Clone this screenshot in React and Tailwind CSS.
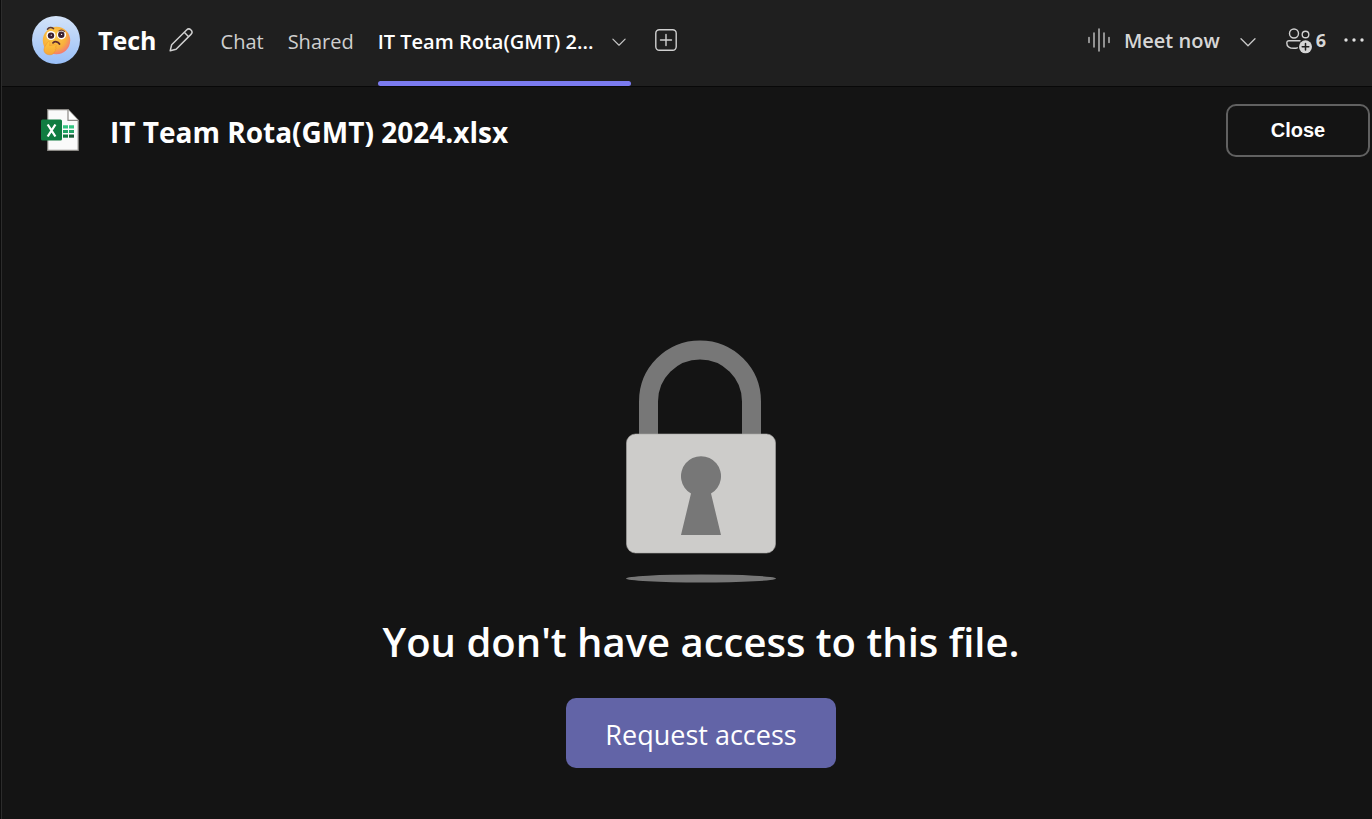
import React from "react";

const sans = "font-['Open_Sans','Noto_Sans',sans-serif]";

function Avatar() {
  return (
    <svg viewBox="0 0 48 48" className="h-12 w-12 shrink-0" role="img" aria-label="Group picture">
      <defs>
        <linearGradient id="sky" x1="0" y1="0" x2="0" y2="1">
          <stop offset="0" stopColor="#d3e3f8" />
          <stop offset="1" stopColor="#99bff8" />
        </linearGradient>
        <radialGradient id="face" cx="0.4" cy="0.35" r="0.7">
          <stop offset="0" stopColor="#fcd04b" />
          <stop offset="0.65" stopColor="#f8b03c" />
          <stop offset="1" stopColor="#f2747a" />
        </radialGradient>
        <linearGradient id="hand" x1="0" y1="0" x2="0" y2="1">
          <stop offset="0" stopColor="#ffc93f" />
          <stop offset="1" stopColor="#f5a637" />
        </linearGradient>
      </defs>
      <circle cx="24" cy="24" r="24" fill="url(#sky)" />
      <circle cx="24.500" cy="24.500" r="13.700" fill="url(#face)" />
      <circle cx="19" cy="19.500" r="4.600" fill="#fff" />
      <circle cx="29.500" cy="18.800" r="4.600" fill="#fff" />
      <circle cx="19" cy="19.600" r="3.200" fill="#3c2130" />
      <circle cx="29.300" cy="18.800" r="3.200" fill="#3c2130" />
      <circle cx="19.300" cy="19.200" r="0.600" fill="#fff" />
      <circle cx="29.600" cy="18.400" r="0.600" fill="#fff" />
      <path d="M15.500 13.200c1.500-2 4-2.200 6-0.600" fill="none" stroke="#5d3c35" strokeWidth="1.600" strokeLinecap="round" />
      <path d="M27 15c2-1.200 4-1 5.500 0.600" fill="none" stroke="#7a4a34" strokeWidth="1.300" strokeLinecap="round" />
      <path d="M21 26.800c2-1.800 5-1.300 6.500 1.200" fill="none" stroke="#5d2b2e" strokeWidth="1.800" strokeLinecap="round" />
      <path d="M15.600 26.200c1-1.600 2.500-1 2.300 1l-0.300 2.300 5-0.800c2-0.200 2.300 1.900 0.700 2.300 1.300 0.600 1 2.200-0.200 2.500 1 0.900 0.400 2.200-0.800 2.400-0.800 2.600-3.600 3.400-6.300 2.700-4.300-1.200-5-5-3-8.400z" fill="url(#hand)" stroke="#ee8f2e" strokeWidth="0.500" />
    </svg>
  );
}

function Pencil() {
  return (
    <svg viewBox="0 0 26 26" className="h-6 w-6" fill="none" stroke="#d0d0d0" strokeWidth="1.600" strokeLinejoin="round">
      <path d="M1.300 24.700l1.600-6.500L19 2.100a3.300 3.300 0 0 1 4.800 4.800L7.700 23.100z" />
      <path d="M16.500 4.700l4.800 4.800" />
    </svg>
  );
}

function Chevron({ className }) {
  return (
    <svg viewBox="0 0 16 16" className={className} fill="none" stroke="#c8c8c8" strokeWidth="1.300" strokeLinecap="round" strokeLinejoin="round">
      <path d="M1 4.700l7 7 7-7" />
    </svg>
  );
}

function AddTab() {
  return (
    <svg viewBox="0 0 22 22" className="h-[22px] w-[22px]" fill="none" stroke="#d0d0d0" strokeWidth="1.400" strokeLinecap="round">
      <rect x="0.800" y="0.800" width="20.400" height="20.400" rx="3.500" />
      <path d="M11 5.500v11M5.500 11h11" />
    </svg>
  );
}

function Wave() {
  return (
    <svg viewBox="0 0 22 24" className="h-6 w-[22px]" fill="none" stroke="#b8b8b8" strokeWidth="1.500" strokeLinecap="round">
      <path d="M1 9.500v5M6 5v14M11 1v22M16 5v14M21 9.500v5" />
    </svg>
  );
}

function People() {
  return (
    <svg viewBox="0 0 26 26" className="h-[26px] w-[26px]" fill="none" stroke="#d0d0d0" strokeWidth="1.400" strokeLinecap="round">
      <circle cx="8" cy="5.500" r="4.500" />
      <circle cx="19.500" cy="6.500" r="3.300" />
      <path d="M14 12.700H3a2.200 2.200 0 0 0-2.200 2.200c0 3.500 3 5.400 7.200 5.400 1.200 0 2.300-0.100 3.300-0.500" />
      <circle cx="19.500" cy="18.800" r="6.500" fill="#d6d6d6" stroke="none" />
      <path d="M19.500 15.500v6.600M16.200 18.800h6.600" stroke="#1f1f1f" strokeWidth="1.500" />
    </svg>
  );
}

function Dots() {
  return (
    <svg viewBox="0 0 20 4" className="h-1 w-5" fill="#e0e0e0">
      <circle cx="2" cy="2" r="1.700" />
      <circle cx="10" cy="2" r="1.700" />
      <circle cx="18" cy="2" r="1.700" />
    </svg>
  );
}

function ExcelFile() {
  return (
    <svg viewBox="0 0 38 42" className="h-[42px] w-[38px] shrink-0" role="img" aria-label="Excel workbook">
      <path d="M6.700 0.700h20.500l10 10.500v30.100H6.700z" fill="#fafafa" stroke="#8b8985" strokeWidth="1.200" />
      <path d="M27 0.700v10.600h10.200" fill="#fff" stroke="#8b8985" strokeWidth="1.200" />
      <path d="M22 16.300h5v3.200h-5zM28 16.300h5v3.200h-5z" fill="#34c481" />
      <path d="M22 20.900h5v3.200h-5zM28 20.900h5v3.200h-5z" fill="#21a365" />
      <path d="M22 25.500h5v3.200h-5z" fill="#107c41" />
      <path d="M28 25.500h5v3.200h-5z" fill="#185c37" />
      <rect x="0" y="10.500" width="21" height="21" rx="1.500" fill="#107c41" />
      <path d="M6.700 15.500l7.700 12M14.400 15.500l-7.700 12" stroke="#fff" strokeWidth="2.300" />
    </svg>
  );
}

function Padlock() {
  return (
    <svg viewBox="0 0 150 244" className="h-[244px] w-[150px]" aria-hidden="true">
      <path d="M22.500 96V61.500a51.500 51.500 0 0 1 103 0V96" fill="none" stroke="#777" strokeWidth="19" />
      <rect x="0.500" y="94" width="149" height="119" rx="9" fill="#cdccca" stroke="#a9a8a6" strokeWidth="0.600" />
      <path d="M65 153.500a20 20 0 1 1 20 0l10 41.500H55z" fill="#777" />
      <ellipse cx="75" cy="238.500" rx="75" ry="4" fill="#777" />
    </svg>
  );
}

export default function App() {
  return (
    <div className={`flex min-h-screen flex-col border-l border-[#0c0c0c] bg-[#141414] ${sans}`}>
      <div className="flex grow flex-col border-l border-[#2c2c2c]">
        <header className="flex h-[87px] items-stretch justify-between border-b border-[#080808] bg-[#1f1f1f] pr-2 pl-[30px]">
          <div className="flex items-stretch">
            <div className="flex items-center pb-1.5">
              <Avatar />
              <h1 className="ml-[18px] pt-0.5 text-[25px] font-bold text-white">Tech</h1>
              <button type="button" aria-label="Edit name" className="ml-3"><Pencil /></button>
            </div>
            <nav className="ml-7 flex items-stretch gap-6 text-xl text-[#cfcfcf]">
              <a href="#chat" className="flex items-center pb-0.5">Chat</a>
              <a href="#shared" className="flex items-center pb-0.5">Shared</a>
              <div className="flex flex-col">
                <div className="flex grow items-center gap-[18px] pt-0.5">
                  <a href="#rota" aria-current="page" className="font-semibold text-white">IT Team Rota(GMT) 2...</a>
                  <button type="button" aria-label="Tab options" className="mr-1"><Chevron className="h-3.5 w-4" /></button>
                </div>
                <div className="h-[5px] rounded-full bg-[#7b7bf0]" />
              </div>
              <button type="button" aria-label="Add a tab" className="flex items-center pb-1.5"><AddTab /></button>
            </nav>
          </div>
          <div className="flex items-center pb-1.5 text-[#d6d6d6]">
            <button type="button" className="flex items-center gap-3.5 text-xl font-semibold">
              <Wave />
              <span className="pt-0.5">Meet now</span>
            </button>
            <button type="button" aria-label="Meeting options" className="ml-5 pt-1"><Chevron className="h-4 w-4" /></button>
            <button type="button" aria-label="People" className="ml-[30px] flex items-center gap-1 text-lg font-bold">
              <span className="pt-0.5"><People /></span>
              6
            </button>
            <button type="button" aria-label="More options" className="ml-[18px]"><Dots /></button>
          </div>
        </header>
        <div className="flex items-start justify-between pt-[17px] pr-0.5 pl-[39px]">
          <div className="flex items-center gap-[31px] pt-[3px]">
            <ExcelFile />
            <h2 className="pt-1 text-[28px] font-bold text-white">IT Team Rota(GMT) 2024.xlsx</h2>
          </div>
          <button type="button" className="h-[53px] w-36 rounded-[10px] border-2 border-[#616161] pb-0.5 font-['Liberation_Sans',sans-serif] text-xl font-bold text-white">Close</button>
        </div>
        <main className="flex flex-col items-center pt-[183px] pl-7">
          <Padlock />
          <p className="mt-7 text-[40px] leading-[60px] font-semibold text-white">You don't have access to this file.</p>
          <button type="button" className="mt-[26px] h-[70px] w-[270px] rounded-[10px] bg-[#6264a7] pt-1 text-[27px] text-white">Request access</button>
        </main>
      </div>
    </div>
  );
}
